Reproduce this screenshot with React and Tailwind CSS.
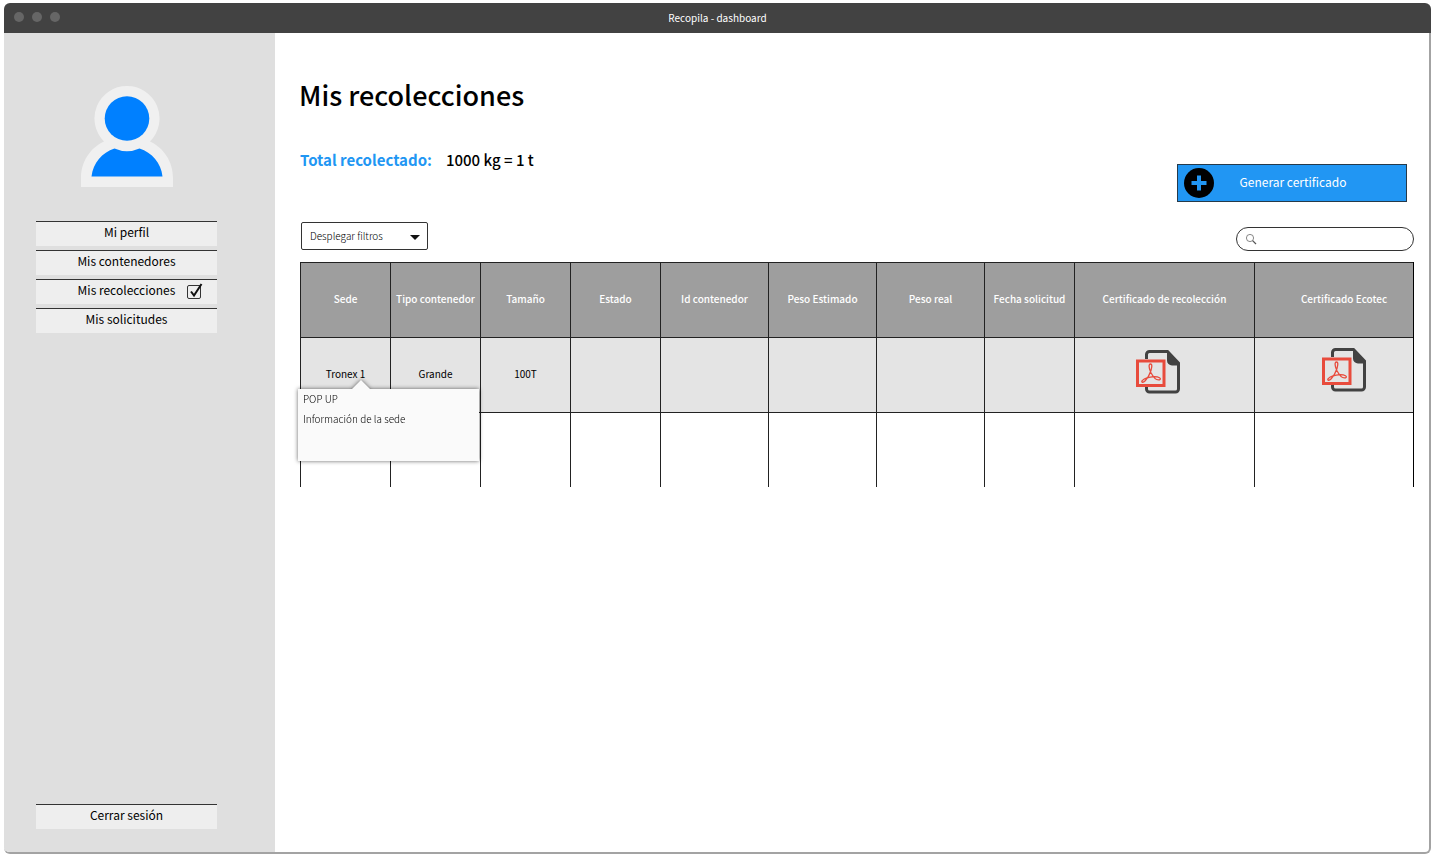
import { Fragment } from "react";

const navItems = [
  { label: "Mi perfil" },
  { label: "Mis contenedores" },
  { label: "Mis recolecciones", current: true },
  { label: "Mis solicitudes" },
];

const columns = [
  { label: "Sede", width: "w-[90px]" },
  { label: "Tipo contenedor", width: "w-[90px]" },
  { label: "Tamaño", width: "w-[90px]" },
  { label: "Estado", width: "w-[90px]" },
  { label: "Id contenedor", width: "w-[108px]" },
  { label: "Peso Estimado", width: "w-[108px]" },
  { label: "Peso real", width: "w-[108px]" },
  { label: "Fecha solicitud", width: "w-[90px]" },
  { label: "Certificado de recolección", width: "w-[180px]" },
  { label: "Certificado Ecotec", width: "w-[159px]", pad: "pl-5" },
];

const navButton =
  "block h-[25px] w-full border-t border-[#333] bg-[#eee] pb-1 text-center text-xs leading-5 font-normal text-black";

const cell = "border-t border-l border-[#222] pb-1";

function Avatar() {
  return (
    <svg viewBox="0 0 92 102" className="h-[102px] w-[92px]" role="img" aria-label="Usuario">
      <path
        d="M46 0a32.500 32.500 0 0 1 23 55.500C83 62 92 76 92 92v9H0v-9C0 76 9 62 23 55.500A32.500 32.500 0 0 1 46 0z"
        fill="#f0f0f0"
      />
      <circle cx="46" cy="32.500" r="22.300" fill="#0080ff" />
      <path d="M10.500 90.500C12 77 21 66.500 33.500 62.500Q46 68 58.500 62.500C71 66.500 80 77 81.500 90.500z" fill="#0080ff" />
    </svg>
  );
}

function PdfIcon() {
  return (
    <svg viewBox="0 0 44 44" className="h-11 w-11" fill="none" aria-hidden="true">
      <path
        d="M10.500 9V4.500a3 3 0 0 1 3-3H31.500L42.500 13v26a3 3 0 0 1-3 3h-26a3 3 0 0 1-3-3v-3"
        stroke="#424242"
        strokeWidth="3"
      />
      <path d="M31 .5L43.500 14v1.500H36a5 5 0 0 1-5-5z" fill="#424242" />
      <rect x="1.500" y="11" width="26.500" height="24.500" stroke="#e84b3c" strokeWidth="3" />
      <path
        d="M14.500 14c-2.200 0-1.500 4.500.2 8.200 2.200 4.200 5.800 8.500 8.800 7.600 2.500-1.200-.8-3.300-5.300-3.200-4.200.2-9.700 1.700-12 4-1.300 1.800.8 2.500 3 .2 2.300-2.500 4.500-6.300 5.700-10C15.800 17.500 16.500 14 14.500 14z"
        stroke="#e84b3c"
        strokeWidth="1.300"
      />
    </svg>
  );
}

function SedePopup() {
  return (
    <div
      role="tooltip"
      className="absolute top-[51px] -left-[3px] z-10 h-[72px] w-[181px] bg-[#fafafa] px-[5px] text-left font-light drop-shadow-[0_0_2px_rgba(0,0,0,0.6)]"
    >
      <svg viewBox="0 0 18 9" className="absolute -top-[9px] left-[54px] h-[9px] w-[18px]" aria-hidden="true">
        <path d="M0 9L9 0l9 9z" fill="#fafafa" />
      </svg>
      <p className="leading-5">POP UP</p>
      <p className="leading-5">Información de la sede</p>
    </div>
  );
}

export default function App() {
  return (
    <div className="flex min-h-screen flex-col bg-white pt-[3px] pr-2 pb-2 pl-1 font-['Noto_Sans_CJK_JP','Noto_Sans',sans-serif] text-black">
      <div className="flex grow flex-col">
        <header className="grid h-[30px] grid-cols-[1fr_auto_1fr] items-center rounded-t-md bg-[#424242]">
          <div className="flex gap-2 pb-0.5 pl-2.5">
            <span className="size-2.5 rounded-full bg-[#666]" />
            <span className="size-2.5 rounded-full bg-[#666]" />
            <span className="size-2.5 rounded-full bg-[#666]" />
          </div>
          <p className="pb-0.5 text-[10px] text-white">Recopila - dashboard</p>
        </header>

        <div className="flex grow overflow-hidden rounded-b-md border-r-2 border-b-2 border-[#a3a3a3]">
          <aside className="flex w-[271px] shrink-0 flex-col bg-[#dfdfdf] pt-[53px] pr-[58px] pb-[23px] pl-8">
            <div className="flex justify-center">
              <Avatar />
            </div>
            <nav className="mt-[33px]">
              <ul className="flex flex-col gap-1">
                {navItems.map((item) => (
                  <li key={item.label} className="relative">
                    <a href="#" className={navButton} aria-current={item.current ? "page" : undefined}>
                      {item.label}
                    </a>
                    {item.current && (
                      <Fragment>
                        <input
                          type="checkbox"
                          defaultChecked
                          aria-label={item.label}
                          className="absolute top-1.5 right-4 size-3.5 appearance-none rounded-xs border border-[#333]"
                        />
                        <svg
                          viewBox="0 0 16 16"
                          className="pointer-events-none absolute top-1 right-3.5 size-4"
                          fill="none"
                          aria-hidden="true"
                        >
                          <path d="M4 8.500l3 4L14.500 1" stroke="#111" strokeWidth="2" />
                        </svg>
                      </Fragment>
                    )}
                  </li>
                ))}
              </ul>
            </nav>
            <button type="button" className={`${navButton} mt-auto`}>
              Cerrar sesión
            </button>
          </aside>

          <main className="min-w-0 grow pt-[41px] pr-[17px] pl-[25px]">
            <h1 className="-ml-px text-[27px] leading-[42px] font-medium">Mis recolecciones</h1>

            <div className="mt-8 flex items-start justify-between">
              <p className="flex gap-3.5 text-[15px] leading-6 font-medium">
                <span className="font-bold text-[#2196f3]">Total recolectado:</span>
                <span>1000 kg = 1 t</span>
              </p>
              <button
                type="button"
                className="mt-4 mr-[5px] flex h-[38px] w-[230px] items-center border border-[#263a4a] bg-[#2196f3] px-1.5 text-xs text-white"
              >
                <svg viewBox="0 0 30 30" className="size-[30px]" aria-hidden="true">
                  <circle cx="15" cy="15" r="15" fill="#000" />
                  <path d="M15 7.500v15M7.500 15h15" stroke="#2196f3" strokeWidth="4" />
                </svg>
                <span className="grow pr-7 pb-0.5 text-center">Generar certificado</span>
              </button>
            </div>

            <div className="mt-5 flex h-[29px] items-end justify-between">
              <div className="relative ml-px self-start">
                <select
                  aria-label="Desplegar filtros"
                  className="block h-7 w-[127px] appearance-none rounded-xs border border-[#333] bg-white pr-6 pb-0.5 pl-2 text-[10px] font-light"
                >
                  <option>Desplegar filtros</option>
                </select>
                <svg
                  viewBox="0 0 10 5"
                  className="pointer-events-none absolute top-[13px] right-2 h-[5px] w-2.5"
                  aria-hidden="true"
                >
                  <path d="M0 0h10L5 5z" fill="#111" />
                </svg>
              </div>
              <label className="-mr-0.5 flex h-6 w-[178px] items-center gap-2 rounded-full border border-[#333] pr-3 pl-2">
                <svg viewBox="0 0 12 12" className="size-3" fill="none" stroke="#555" aria-hidden="true">
                  <circle cx="5" cy="5" r="3.600" strokeWidth=".7" />
                  <path d="M7.600 7.600L11 11" strokeWidth="1.200" />
                </svg>
                <input type="search" aria-label="Buscar" className="min-w-0 grow text-[10px] outline-none" />
              </label>
            </div>

            <table className="mt-[11px] w-full table-fixed border-separate border-spacing-0 border-r border-black text-center text-[10px]">
              <thead>
                <tr className="h-[75px] bg-[#9e9e9e] text-white">
                  {columns.map((column) => (
                    <th
                      key={column.label}
                      scope="col"
                      className={`${cell} px-0 font-medium whitespace-nowrap ${column.width} ${column.pad ?? ""}`}
                    >
                      {column.label}
                    </th>
                  ))}
                </tr>
              </thead>
              <tbody>
                <tr className="h-[75px] bg-[#e4e4e4]">
                  <td className={`${cell} relative`}>
                    Tronex 1
                    <SedePopup />
                  </td>
                  <td className={cell}>Grande</td>
                  <td className={cell}>100T</td>
                  <td className={cell} />
                  <td className={cell} />
                  <td className={cell} />
                  <td className={cell} />
                  <td className={cell} />
                  <td className="border-t border-l border-[#222] pr-3.5 pb-1.5">
                    <a href="#" aria-label="Certificado de recolección en PDF" className="inline-block align-middle">
                      <PdfIcon />
                    </a>
                  </td>
                  <td className="border-t border-l border-[#222] pb-2.5 pl-5">
                    <a href="#" aria-label="Certificado Ecotec en PDF" className="inline-block align-middle">
                      <PdfIcon />
                    </a>
                  </td>
                </tr>
                <tr className="h-[75px]">
                  {columns.map((column) => (
                    <td key={column.label} className={cell} />
                  ))}
                </tr>
              </tbody>
            </table>
          </main>
        </div>
      </div>
    </div>
  );
}
